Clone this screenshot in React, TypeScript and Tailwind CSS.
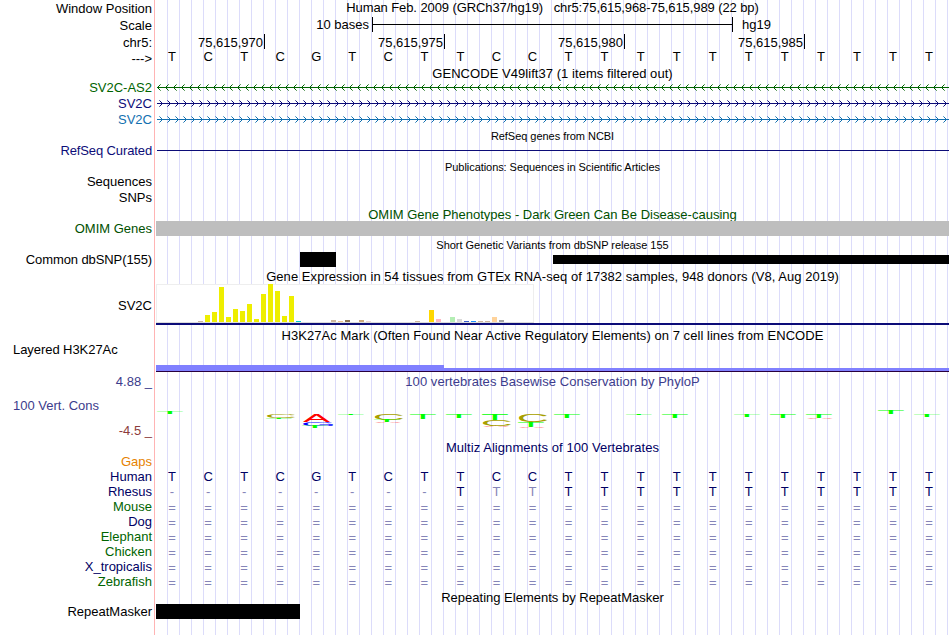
import type { ReactNode } from "react"
import clsx from "clsx"

const HUMAN = "TCTCGTCTTCCTTTTTTTTTTT".split("")
const RHESUS = "--------TTTTTTTTTTTTTT".split("")
const GAP = "======================".split("")

const Y = "#eeee00"
const TAN = "#cdb79e"

// GTEx tissue index -> [height, colour]
const EXPRESSION: Record<number, [number, string]> = {
  6: [1, TAN],
  7: [7, Y],
  8: [10, Y],
  9: [35, Y],
  10: [5, Y],
  11: [13, Y],
  12: [11, Y],
  13: [18, Y],
  14: [3, Y],
  15: [28, Y],
  16: [38, Y],
  17: [31, Y],
  18: [6, Y],
  19: [26, Y],
  20: [1, "#00cdcd"],
  25: [2, TAN],
  26: [1, "#eec591"],
  27: [2, "#8b7355"],
  29: [2, "#cdaa7d"],
  30: [1, "#eed5d2"],
  37: [1, TAN],
  39: [12, "#ffd700"],
  40: [3, "#ffb6c1"],
  42: [5, "#b4eeb4"],
  43: [3, "#d9d9d9"],
  44: [1, "#3a5fcd"],
  45: [1, "#1e90ff"],
  46: [1, TAN],
  47: [1, TAN],
  48: [5, "#ffd39b"],
  49: [2, "#a6a6a6"],
}

const BASE_COLORS: Record<string, string> = {
  T: "#00ff00",
  C: "#a89f00",
  A: "#ff0000",
  G: "#0000ff",
}

// ink box of each letter at font-size 10: [left, width]
const INK: Record<string, [number, number]> = {
  T: [0.2, 5.7],
  C: [0.5, 6.3],
  A: [0, 6.65],
  G: [0.5, 6.6],
}

// letter, x, y, width, height inside the conservation track
const LOGO: [string, number, number, number, number][] = [
  ["T", 1, 21, 26, 3],
  ["C", 111, 24, 28, 4],
  ["T", 110, 28, 26, 1],
  ["A", 147, 24, 27, 8],
  ["G", 147, 32, 30, 4],
  ["T", 146, 36, 26, 2],
  ["T", 182, 24, 26, 1],
  ["C", 219, 24, 28, 6],
  ["T", 218, 30, 26, 2],
  ["A", 219, 32, 26, 1],
  ["T", 254, 24, 26, 5],
  ["T", 290, 24, 26, 4],
  ["T", 326, 24, 26, 6],
  ["C", 327, 30, 28, 6],
  ["A", 327, 36, 26, 1],
  ["C", 363, 24, 28, 8],
  ["T", 362, 32, 26, 5],
  ["A", 363, 37, 26, 1],
  ["T", 398, 24, 26, 4],
  ["T", 470, 24, 26, 1],
  ["T", 506, 24, 26, 4],
  ["T", 578, 24, 26, 3],
  ["T", 614, 24, 26, 4],
  ["T", 650, 24, 26, 4],
  ["A", 651, 28, 26, 1],
  ["T", 722, 20, 26, 4],
  ["T", 758, 24, 26, 3],
]

type RowProps = {
  h: string
  label?: ReactNode
  labelClass?: string
  children?: ReactNode
}

function Row({ h, label, labelClass, children }: RowProps) {
  return (
    <div className={clsx("flex shrink-0", h)}>
      <div className={clsx("w-[152px] shrink-0 text-right", labelClass)}>{label}</div>
      <div className="ml-1 w-[793px] shrink-0">{children}</div>
    </div>
  )
}

function Title({ children, className }: { children: ReactNode; className?: string }) {
  return <div className={clsx("text-center", className)}>{children}</div>
}

function Bases({ bases, className, faded }: { bases: string[]; className?: string; faded?: number[] }) {
  return (
    <div className={clsx("flex", className)}>
      {bases.map((b, i) => (
        <span
          key={i}
          className={clsx(
            "flex-1 basis-0 pr-1 text-center",
            (b === "-" || b === "=" || faded?.includes(i)) && "text-[#8585b8]",
          )}
        >
          {b}
        </span>
      ))}
    </div>
  )
}

function Strand({ id, color, reverse }: { id: string; color: string; reverse?: boolean }) {
  return (
    <svg width="793" height="16" className="block" shapeRendering="crispEdges">
      <defs>
        <pattern id={id} width="8" height="16" patternUnits="userSpaceOnUse">
          {[0, 1, 2, 3].map((n) => {
            const x = reverse ? 1 + n : 6 - n
            return (
              <g key={n} fill={color} opacity={n === 3 ? 0.6 : 1}>
                <rect x={x} y={7 - n} width="1" height="1" />
                <rect x={x} y={7 + n} width="1" height="1" />
              </g>
            )
          })}
        </pattern>
      </defs>
      <rect width="793" height="16" fill={`url(#${id})`} />
      <rect x="1" y="7" width="792" height="1" fill={color} />
    </svg>
  )
}

function Ruler() {
  return (
    <div className="flex h-full">
      {["75,615,970", "75,615,975", "75,615,980", "75,615,985"].map((pos, i) => (
        <div
          key={pos}
          className={clsx(
            "h-[15px] shrink-0 border-r border-black pr-px pt-px text-right",
            i === 0 ? "w-[109px]" : "w-[180px]",
          )}
        >
          {pos}
        </div>
      ))}
    </div>
  )
}

function Expression() {
  return (
    <div className="flex h-[41px] flex-col">
      <div className="flex h-[39px] w-[378px] items-end gap-[2px] border-b border-[#dcdcdc] bg-white shadow-[inset_1px_1px_0_#eeeeee,inset_-1px_0_0_#eeeeee]">
        {Array.from({ length: 54 }, (_, i) => {
          const [height, backgroundColor] = EXPRESSION[i] ?? [0, "transparent"]
          return <div key={i} className="w-[5px] shrink-0" style={{ height, backgroundColor }} />
        })}
      </div>
      <div className="h-[2px] bg-[#0c0c78]" />
    </div>
  )
}

function Logo() {
  return (
    <svg width="793" height="50" className="block">
      {LOGO.map(([ch, x, y, w, h], i) => {
        const [left, width] = INK[ch]
        const sx = w / width
        const sy = h / 6.88
        return (
          <text
            key={i}
            transform={`translate(${x - left * sx} ${y + h}) scale(${sx} ${sy})`}
            fontSize="10"
            fill={BASE_COLORS[ch]}
          >
            {ch}
          </text>
        )
      })}
    </svg>
  )
}

const SPECIES = [
  ["Mouse", "text-[#006400]"],
  ["Dog", "text-[#000064]"],
  ["Elephant", "text-[#006400]"],
  ["Chicken", "text-[#006400]"],
  ["X_tropicalis", "text-[#000064]"],
  ["Zebrafish", "text-[#006400]"],
]

export default function App() {
  return (
    <div className="relative h-[635px] w-[950px] overflow-hidden bg-white font-['Liberation_Sans',Arial,sans-serif] text-[13px] leading-[15px] whitespace-pre text-black">
      {/* guide lines behind every track */}
      <div className="absolute inset-y-0 left-[154px] w-px bg-[#ffb4b4]" />
      <div className="absolute inset-y-0 left-[156px] w-[793px] bg-[repeating-linear-gradient(to_right,transparent_0,transparent_11px,#dcdcfa_11px,#dcdcfa_12px)]" />

      <div className="relative flex flex-col">
        <Row h="h-[17px]" label="Window Position" labelClass="pt-px">
          <Title className="tracking-[-0.09px]">
            {"Human Feb. 2009 (GRCh37/hg19)   chr5:75,615,968-75,615,989 (22 bp)"}
          </Title>
        </Row>
        <Row h="h-[17px]" label="Scale" labelClass="pt-px">
          <div className="flex">
            <div className="w-[213px] text-right">10 bases</div>
            <div className="ml-[3px] flex h-[15px] w-[361px] items-center border-x border-black">
              <div className="h-px w-full bg-black" />
            </div>
            <div className="ml-[9px]">hg19</div>
          </div>
        </Row>
        <Row h="h-[15px]" label="chr5:" labelClass="pt-px">
          <Ruler />
        </Row>
        <Row h="h-[17px]" label="--->" labelClass="pt-[2px]">
          <Bases bases={HUMAN} />
        </Row>
        <Row h="h-[14px]">
          <Title className="tracking-[0.05px]">GENCODE V49lift37 (1 items filtered out)</Title>
        </Row>
        <Row h="h-[16px]" label="SV2C-AS2" labelClass="text-[#006400]">
          <Strand id="as2" color="#006400" reverse />
        </Row>
        <Row h="h-[16px]" label="SV2C" labelClass="text-[#0c0c78]">
          <Strand id="sv2c-a" color="#0c0c78" />
        </Row>
        <Row h="h-[16px]" label="SV2C" labelClass="text-[#1270b0]">
          <Strand id="sv2c-b" color="#1270b0" />
        </Row>
        <Row h="h-[15px]">
          <Title className="pt-px text-[11px] leading-[15px] tracking-[-0.04px]">RefSeq genes from NCBI</Title>
        </Row>
        <Row h="h-[16px]" label="RefSeq Curated" labelClass="text-[#0c0c78] tracking-[-0.12px]">
          <div className="ml-px mt-[7px] h-px bg-[#0c0c78]" />
        </Row>
        <Row h="h-[15px]">
          <Title className="pt-px text-[11px] leading-[15px] tracking-[-0.06px]">
            Publications: Sequences in Scientific Articles
          </Title>
        </Row>
        <Row h="h-[16px]" label="Sequences" />
        <Row h="h-[17px]" label="SNPs" />
        <Row h="h-[14px]">
          <Title className="text-[#005000]">OMIM Gene Phenotypes - Dark Green Can Be Disease-causing</Title>
        </Row>
        <Row h="h-[16px]" label="OMIM Genes" labelClass="text-[#005000]">
          <div className="h-[15px] bg-[#bebebe]" />
        </Row>
        <Row h="h-[15px]">
          <Title className="pt-px text-[11px] leading-[15px] tracking-[-0.02px]">
            Short Genetic Variants from dbSNP release 155
          </Title>
        </Row>
        <Row h="h-[17px]" label="Common dbSNP(155)" labelClass="tracking-[-0.1px]">
          <div className="flex items-center">
            <div className="ml-[144px] h-[15px] w-9 bg-black" />
            <div className="ml-[217px] h-[9px] flex-1 bg-black" />
          </div>
        </Row>
        <Row h="h-[15px]">
          <Title className="tracking-[0.06px]">
            Gene Expression in 54 tissues from GTEx RNA-seq of 17382 samples, 948 donors (V8, Aug 2019)
          </Title>
        </Row>
        <Row h="h-[44px]" label="SV2C" labelClass="pt-[14px]">
          <Expression />
        </Row>
        <Row h="h-[14px]">
          <Title className="tracking-[0.05px]">
            H3K27Ac Mark (Often Found Near Active Regulatory Elements) on 7 cell lines from ENCODE
          </Title>
        </Row>
        <Row h="h-[32px]" label={<div className="pl-[13px] text-left tracking-[-0.06px]">Layered H3K27Ac</div>}>
          <div className="flex h-[30px] items-end border-b border-[#28003c]">
            <div className="h-[6px] w-[288px] bg-[#8080ff]" />
            <div className="h-[3px] flex-1 bg-[#8080ff]" />
          </div>
        </Row>
        <Row h="h-[16px]" label="4.88 _" labelClass="text-[#3c3c8c]">
          <Title className="tracking-[0.05px] text-[#3c3c8c]">100 vertebrates Basewise Conservation by PhyloP</Title>
        </Row>
        <Row
          h="h-[50px]"
          label={
            <>
              <div className="pt-2 pl-[13px] text-left">100 Vert. Cons</div>
              <div className="pt-[10px] text-[#8c3c3c]">-4.5 _</div>
            </>
          }
          labelClass="text-[#3c3c8c]"
        >
          <Logo />
        </Row>
        <Row h="h-[14px]">
          <Title className="tracking-[0.06px] text-[#000064]">Multiz Alignments of 100 Vertebrates</Title>
        </Row>
        <Row h="h-[15px]" label="Gaps" labelClass="text-[#e68200]" />
        <Row h="h-[15px]" label="Human" labelClass="text-[#000064]">
          <Bases bases={HUMAN} className="text-[#000064]" />
        </Row>
        <Row h="h-[15px]" label="Rhesus" labelClass="text-[#000064]">
          <Bases bases={RHESUS} className="text-[#000064]" faded={[9, 10]} />
        </Row>
        {SPECIES.map(([name, color]) => (
          <Row key={name} h="h-[15px]" label={name} labelClass={color}>
            <Bases bases={GAP} className="pt-px" />
          </Row>
        ))}
        <Row h="h-[15px]">
          <Title className="pt-px">Repeating Elements by RepeatMasker</Title>
        </Row>
        <Row h="h-[31px]" label="RepeatMasker">
          <div className="h-[15px] w-[144px] bg-black" />
        </Row>
      </div>
    </div>
  )
}
